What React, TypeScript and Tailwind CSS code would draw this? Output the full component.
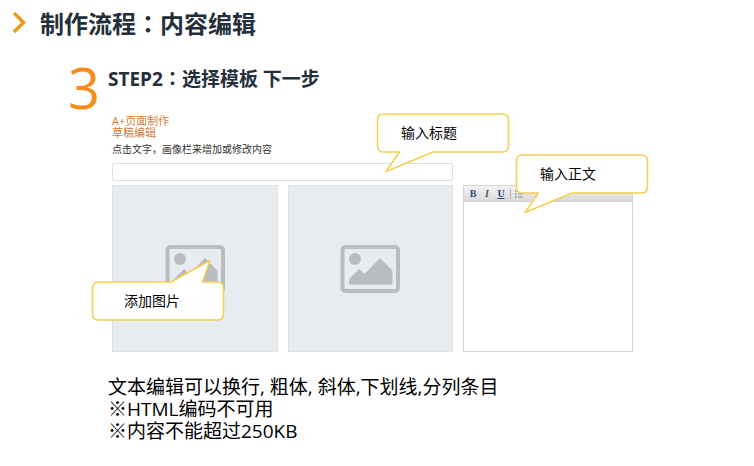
import type { ReactNode } from "react";

const FONT = "font-['Open_Sans','Noto_Sans_CJK_SC',sans-serif]";

// Colon that sits in the middle of its cell
function Colon() {
  return <span className="font-['Noto_Sans_CJK_TC',sans-serif]">：</span>;
}

function PictureIcon() {
  return (
    <svg viewBox="0 0 60 48" className="h-12 w-15" aria-hidden="true">
      <rect x="2.500" y="2" width="55.500" height="44" rx="3" fill="none" stroke="#b9bdc1" strokeWidth="4" />
      <circle cx="15" cy="14" r="6" fill="#b9bdc1" />
      <path d="M9 39.500V34L19 24l5.500 5L40 13l12.500 12.500v14z" fill="#b9bdc1" />
    </svg>
  );
}

type CalloutProps = {
  className: string;
  tail: "down" | "up";
  children: ReactNode;
};

function Callout({ className, tail, children }: CalloutProps) {
  return (
    <div className={`absolute z-10 flex h-10 w-33 items-center text-sm text-black ${className}`}>
      <svg viewBox="0 0 132 40" className="absolute inset-0 h-10 w-33 overflow-visible" aria-hidden="true">
        <path
          d={
            tail === "down"
              ? "M6.500 1H125.500Q131.500 1 131.500 7V33Q131.500 39 125.500 39H56L9 58.500L22.500 39H6.500Q.5 39 .5 33V7Q.5 1 6.500 1Z"
              : "M6.500 1H79L118 -20.500L110.500 1H125.500Q131.500 1 131.500 7V33Q131.500 39 125.500 39H6.500Q.5 39 .5 33V7Q.5 1 6.500 1Z"
          }
          fill="#fff"
          stroke="#f6cf4e"
          strokeWidth="1.500"
          strokeLinejoin="round"
        />
      </svg>
      <span className="relative">{children}</span>
    </div>
  );
}

function PictureSlot({ label, children }: { label: string; children?: ReactNode }) {
  return (
    <div className="relative flex-1">
      <button
        type="button"
        aria-label={label}
        className="flex h-[167px] w-full items-center justify-center border border-[#dde2e4] bg-[#e8ecf0]"
      >
        <PictureIcon />
      </button>
      {children}
    </div>
  );
}

function Toolbar() {
  return (
    <div className="flex h-4 items-center gap-1 border-b border-[#cfcfcf] bg-linear-to-b from-[#f3f3f3] to-[#d9d9d9] px-1 font-['Liberation_Serif',serif] text-[10px] leading-none text-[#2c4a7c]">
      <button type="button" aria-label="粗体" className="w-2.5 font-bold">
        B
      </button>
      <button type="button" aria-label="斜体" className="w-2.5 font-bold italic text-[#555]">
        I
      </button>
      <button type="button" aria-label="下划线" className="w-2.5 font-bold underline">
        U
      </button>
      <span className="h-2.5 w-px bg-[#b5b5b5]" />
      <button type="button" aria-label="分列条目">
        <svg viewBox="0 0 8 8" className="size-2" aria-hidden="true">
          <path d="M0 1h1.500M0 4h1.500M0 7h1.500" stroke="#3d66a8" />
          <path d="M3 1h5M3 4h5M3 7h5" stroke="#999" />
        </svg>
      </button>
    </div>
  );
}

export default function App() {
  return (
    <main className={`min-h-screen bg-white pb-4 text-black ${FONT}`}>
      <header className="flex items-center gap-3 pt-1 pl-3">
        <svg viewBox="0 0 16 24" className="h-6 w-4" aria-hidden="true">
          <path d="M2 1l9.500 9.500L2 20" fill="none" stroke="#eb9d17" strokeWidth="3.500" />
        </svg>
        <h1 className="text-2xl leading-[38px] font-bold text-[#232f3a]">
          制作流程
          <Colon />
          内容编辑
        </h1>
      </header>

      <section className="pr-[121px] pl-[68px]">
        <div className="flex items-start gap-2 pt-4">
          <span className="w-8 text-center text-[56px] leading-14 text-[#f88b1b]">3</span>
          <h2 className="pt-1 text-[19px] leading-[30px] font-bold text-[#232f3a]">
            STEP2
            <Colon />
            选择模板 下一步
          </h2>
        </div>

        <div className="pl-11">
          <div className="text-[11px] leading-3 text-[#cf7c3c]">
            <p>A+页面制作</p>
            <p>草稿编辑</p>
          </div>
          <label htmlFor="title" className="block pt-0.5 text-[10px] leading-4 text-[#333]">
            点击文字，画像栏来增加或修改内容
          </label>

          <div className="flex gap-2.5 pt-1.5">
            <div className="flex flex-1 flex-col gap-1">
              <div className="relative">
                <input
                  id="title"
                  type="text"
                  className="block h-[18px] w-full rounded-xs border border-[#dcdfe1] bg-white px-1 text-[10px] outline-none"
                />
                <Callout className="-top-[50px] -right-14 pl-6" tail="down">
                  输入标题
                </Callout>
              </div>
              <div className="flex gap-2.5">
                <PictureSlot label="图片 1">
                  <Callout className="top-24 -left-5 pl-8" tail="up">
                    添加图片
                  </Callout>
                </PictureSlot>
                <PictureSlot label="图片 2" />
              </div>
            </div>

            <div className="relative mt-[22px] flex w-[170px] flex-col border border-[#d2d4d6]">
              <Toolbar />
              <textarea aria-label="正文" className="h-px w-full flex-1 resize-none bg-white p-1 text-[10px] outline-none" />
              <Callout className="-top-8 -right-4 pl-6" tail="down">
                输入正文
              </Callout>
            </div>
          </div>

          <div className="-ml-1 pt-6 text-[19px] leading-[22px]">
            <p>文本编辑可以换行, 粗体, 斜体,下划线,分列条目</p>
            <p>※HTML编码不可用</p>
            <p>※内容不能超过250KB</p>
          </div>
        </div>
      </section>
    </main>
  );
}
